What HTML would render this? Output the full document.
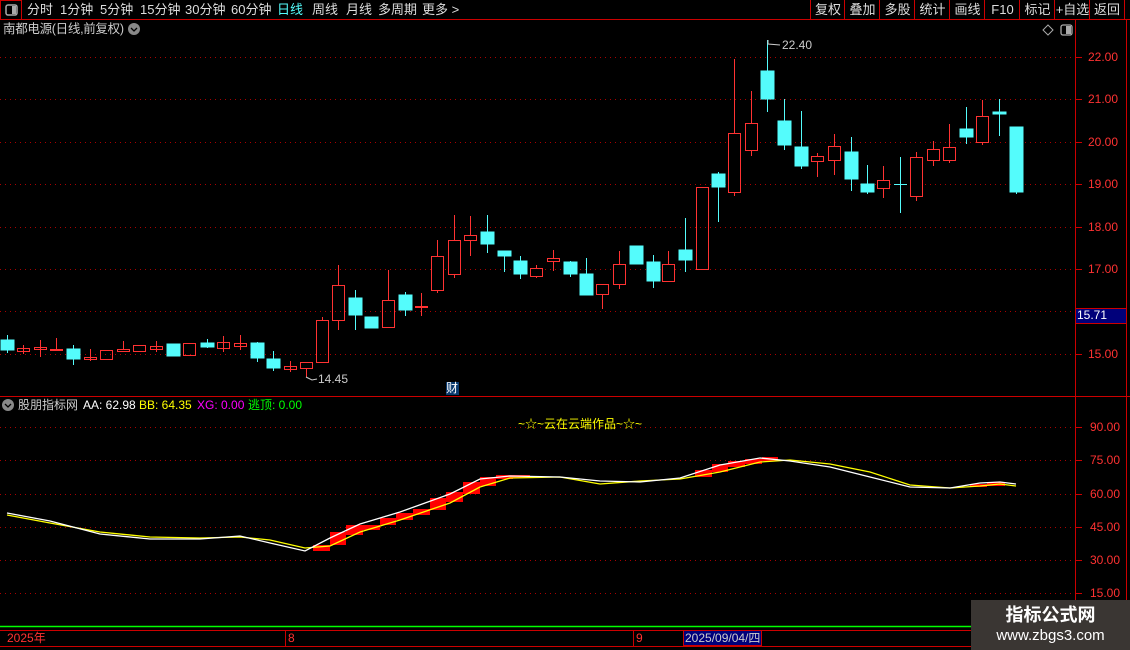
<!DOCTYPE html>
<html><head><meta charset="utf-8"><style>
body{margin:0;width:1130px;height:650px;background:#000;overflow:hidden;position:relative;font-family:"Liberation Sans","Noto Sans CJK SC",sans-serif;}
.t{position:absolute;white-space:nowrap;font-size:13px;line-height:15px;}
.btn{position:absolute;top:0;height:19px;border-left:1px solid #c00;color:#ddd;font-size:13px;line-height:19px;text-align:center;}
svg{position:absolute;left:0;top:0;}
</style></head><body>
<svg width="1130" height="650">
<line x1="0" y1="19.5" x2="1130" y2="19.5" stroke="#c00"/>
<rect x="0.5" y="0.5" width="21" height="19" fill="none" stroke="#c00"/>
<rect x="6" y="5" width="11" height="10" rx="2" fill="none" stroke="#aaa" stroke-width="1.5"/><rect x="12" y="6" width="4" height="8" fill="#aaa"/>
<line x1="0" y1="396.5" x2="1130" y2="396.5" stroke="#c00"/>
<line x1="1075.5" y1="20" x2="1075.5" y2="630" stroke="#c00"/>
<line x1="1126.5" y1="20" x2="1126.5" y2="630" stroke="#c00"/>
<g stroke="#a00" stroke-dasharray="1,4">
<line x1="0" y1="57.5" x2="1075" y2="57.5"/><line x1="0" y1="99.5" x2="1075" y2="99.5"/><line x1="0" y1="142.5" x2="1075" y2="142.5"/><line x1="0" y1="184.5" x2="1075" y2="184.5"/><line x1="0" y1="227.5" x2="1075" y2="227.5"/><line x1="0" y1="269.5" x2="1075" y2="269.5"/><line x1="0" y1="311.5" x2="1075" y2="311.5"/><line x1="0" y1="354.5" x2="1075" y2="354.5"/>
<line x1="0" y1="427.5" x2="1075" y2="427.5"/><line x1="0" y1="460.5" x2="1075" y2="460.5"/><line x1="0" y1="494.5" x2="1075" y2="494.5"/><line x1="0" y1="527.5" x2="1075" y2="527.5"/><line x1="0" y1="560.5" x2="1075" y2="560.5"/><line x1="0" y1="593.5" x2="1075" y2="593.5"/>
</g>
<g stroke="#c00"><line x1="1076" y1="57.5" x2="1082" y2="57.5"/><line x1="1076" y1="99.5" x2="1082" y2="99.5"/><line x1="1076" y1="142.5" x2="1082" y2="142.5"/><line x1="1076" y1="184.5" x2="1082" y2="184.5"/><line x1="1076" y1="227.5" x2="1082" y2="227.5"/><line x1="1076" y1="269.5" x2="1082" y2="269.5"/><line x1="1076" y1="354.5" x2="1082" y2="354.5"/>
<line x1="1076" y1="427.5" x2="1082" y2="427.5"/><line x1="1076" y1="460.5" x2="1082" y2="460.5"/><line x1="1076" y1="494.5" x2="1082" y2="494.5"/><line x1="1076" y1="527.5" x2="1082" y2="527.5"/><line x1="1076" y1="560.5" x2="1082" y2="560.5"/><line x1="1076" y1="593.5" x2="1082" y2="593.5"/></g>
<rect x="1075.5" y="308.5" width="51" height="15" fill="#00007a" stroke="#c00"/>
<g stroke="#54FCFC" fill="#54FCFC">
<line x1="7.5" y1="335" x2="7.5" y2="353"/><rect x="1" y="340" width="13" height="10"/>
<line x1="73.5" y1="345" x2="73.5" y2="365"/><rect x="67" y="349" width="13" height="10"/>
<rect x="167" y="344" width="13" height="12"/>
<line x1="207.5" y1="339" x2="207.5" y2="348"/><rect x="201" y="343" width="13" height="4"/>
<line x1="257.5" y1="342" x2="257.5" y2="362"/><rect x="251" y="343" width="13" height="15"/>
<line x1="273.5" y1="351" x2="273.5" y2="371"/><rect x="267" y="359" width="13" height="9"/>
<line x1="355.5" y1="290" x2="355.5" y2="330"/><rect x="349" y="298" width="13" height="17"/>
<rect x="365" y="317" width="13" height="11"/>
<line x1="405.5" y1="292" x2="405.5" y2="316"/><rect x="399" y="295" width="13" height="15"/>
<line x1="487.5" y1="215" x2="487.5" y2="253"/><rect x="481" y="232" width="13" height="12"/>
<line x1="504.5" y1="251" x2="504.5" y2="272"/><rect x="498" y="251" width="13" height="5"/>
<line x1="520.5" y1="256" x2="520.5" y2="279"/><rect x="514" y="261" width="13" height="13"/>
<line x1="570.5" y1="261" x2="570.5" y2="277"/><rect x="564" y="262" width="13" height="12"/>
<line x1="586.5" y1="258" x2="586.5" y2="295"/><rect x="580" y="274" width="13" height="21"/>
<rect x="630" y="246" width="13" height="18"/>
<line x1="653.5" y1="255" x2="653.5" y2="288"/><rect x="647" y="262" width="13" height="19"/>
<line x1="685.5" y1="218" x2="685.5" y2="272"/><rect x="679" y="250" width="13" height="10"/>
<line x1="718.5" y1="172" x2="718.5" y2="222"/><rect x="712" y="174" width="13" height="13"/>
<line x1="767.5" y1="40" x2="767.5" y2="112"/><rect x="761" y="71" width="13" height="28"/>
<line x1="784.5" y1="99" x2="784.5" y2="150"/><rect x="778" y="121" width="13" height="24"/>
<line x1="801.5" y1="111" x2="801.5" y2="169"/><rect x="795" y="147" width="13" height="19"/>
<line x1="851.5" y1="137" x2="851.5" y2="191"/><rect x="845" y="152" width="13" height="27"/>
<line x1="867.5" y1="165" x2="867.5" y2="194"/><rect x="861" y="184" width="13" height="8"/>
<line x1="900.5" y1="157" x2="900.5" y2="213"/><line x1="894" y1="184.5" x2="907" y2="184.5"/>
<line x1="966.5" y1="107" x2="966.5" y2="144"/><rect x="960" y="129" width="13" height="8"/>
<line x1="999.5" y1="99" x2="999.5" y2="136"/><rect x="993" y="112" width="13" height="2"/>
<line x1="1016.5" y1="127" x2="1016.5" y2="194"/><rect x="1010" y="127" width="13" height="65"/>
</g>
<g stroke="#FF3232" fill="none">
<rect x="17.5" y="348.5" width="12" height="3"/><line x1="23.5" y1="345" x2="23.5" y2="354"/>
<line x1="40.5" y1="340" x2="40.5" y2="357"/><rect x="34.5" y="347.5" width="12" height="2"/>
<line x1="56.5" y1="338" x2="56.5" y2="349"/><rect x="50.5" y="349.5" width="12" height="1"/>
<line x1="90.5" y1="349" x2="90.5" y2="361"/><rect x="84.5" y="357.5" width="12" height="2"/>
<rect x="100.5" y="350.5" width="12" height="9"/>
<line x1="123.5" y1="341" x2="123.5" y2="350"/><rect x="117.5" y="349.5" width="12" height="2"/>
<rect x="133.5" y="345.5" width="12" height="6"/>
<line x1="156.5" y1="341" x2="156.5" y2="352"/><rect x="150.5" y="346.5" width="12" height="3"/>
<rect x="183.5" y="343.5" width="12" height="12"/>
<line x1="223.5" y1="336" x2="223.5" y2="352"/><rect x="217.5" y="342.5" width="12" height="6"/>
<line x1="240.5" y1="335" x2="240.5" y2="350"/><rect x="234.5" y="343.5" width="12" height="3"/>
<line x1="290.5" y1="361" x2="290.5" y2="372"/><rect x="284.5" y="366.5" width="12" height="3"/>
<line x1="306.5" y1="368" x2="306.5" y2="377"/><rect x="300.5" y="362.5" width="12" height="6"/>
<rect x="316.5" y="320.5" width="12" height="42"/><line x1="322.5" y1="317" x2="322.5" y2="320"/>
<line x1="338.5" y1="265" x2="338.5" y2="285"/><rect x="332.5" y="285.5" width="12" height="35"/><line x1="338.5" y1="321" x2="338.5" y2="330"/>
<line x1="388.5" y1="270" x2="388.5" y2="300"/><rect x="382.5" y="300.5" width="12" height="27"/>
<line x1="421.5" y1="293" x2="421.5" y2="316"/><line x1="415" y1="307" x2="428" y2="307" stroke-width="2"/>
<line x1="437.5" y1="240" x2="437.5" y2="293"/><rect x="431.5" y="256.5" width="12" height="34" fill="#000"/>
<line x1="454.5" y1="215" x2="454.5" y2="278"/><rect x="448.5" y="240.5" width="12" height="34" fill="#000"/>
<line x1="470.5" y1="216" x2="470.5" y2="256"/><rect x="464.5" y="235.5" width="12" height="5" fill="#000"/>
<line x1="536.5" y1="265" x2="536.5" y2="278"/><rect x="530.5" y="268.5" width="12" height="8" fill="#000"/>
<line x1="553.5" y1="250" x2="553.5" y2="271"/><rect x="547.5" y="258.5" width="12" height="3" fill="#000"/>
<line x1="602.5" y1="294" x2="602.5" y2="309"/><rect x="596.5" y="284.5" width="12" height="10" fill="#000"/>
<line x1="619.5" y1="251" x2="619.5" y2="289"/><rect x="613.5" y="264.5" width="12" height="20" fill="#000"/>
<line x1="668.5" y1="251" x2="668.5" y2="281"/><rect x="662.5" y="264.5" width="12" height="17" fill="#000"/>
<rect x="696.5" y="187.5" width="12" height="82"/>
<line x1="734.5" y1="59" x2="734.5" y2="196"/><rect x="728.5" y="133.5" width="12" height="59" fill="#000"/>
<line x1="751.5" y1="91" x2="751.5" y2="156"/><rect x="745.5" y="123.5" width="12" height="27" fill="#000"/>
<line x1="817.5" y1="153" x2="817.5" y2="177"/><rect x="811.5" y="156.5" width="12" height="5" fill="#000"/>
<line x1="834.5" y1="134" x2="834.5" y2="175"/><rect x="828.5" y="146.5" width="12" height="14" fill="#000"/>
<line x1="883.5" y1="166" x2="883.5" y2="198"/><rect x="877.5" y="180.5" width="12" height="8" fill="#000"/>
<line x1="916.5" y1="152" x2="916.5" y2="201"/><rect x="910.5" y="157.5" width="12" height="39" fill="#000"/>
<line x1="933.5" y1="141" x2="933.5" y2="166"/><rect x="927.5" y="149.5" width="12" height="11" fill="#000"/>
<line x1="949.5" y1="124" x2="949.5" y2="163"/><rect x="943.5" y="147.5" width="12" height="13" fill="#000"/>
<line x1="982.5" y1="100" x2="982.5" y2="145"/><rect x="976.5" y="116.5" width="12" height="26" fill="#000"/>
</g>
<polyline points="768,40 768,44 780,45" fill="none" stroke="#ccc"/>
<polyline points="306,377 312,380 317,379" fill="none" stroke="#ccc"/>
<rect x="446" y="382" width="13" height="13" fill="#0a3a6e"/>
<g fill="#f00">
<rect x="313" y="545" width="17" height="6"/><rect x="330" y="532" width="16" height="13"/><rect x="346" y="525" width="17" height="10"/><rect x="363" y="525" width="17" height="5"/><rect x="380" y="518" width="16" height="7"/><rect x="396" y="513" width="17" height="7"/><rect x="413" y="509" width="17" height="6"/><rect x="430" y="498" width="16" height="12"/><rect x="446" y="492" width="17" height="10"/><rect x="463" y="482" width="17" height="12"/><rect x="480" y="477" width="16" height="9"/><rect x="496" y="475" width="17" height="4"/><rect x="513" y="475" width="17" height="3"/>
<rect x="695" y="470" width="17" height="7"/><rect x="712" y="464" width="16" height="8"/><rect x="728" y="461" width="17" height="6"/><rect x="745" y="459" width="17" height="5"/><rect x="762" y="457" width="16" height="4"/>
<rect x="970" y="484" width="17" height="3"/><rect x="987" y="482" width="18" height="4"/>
</g>
<polyline fill="none" stroke="#ff0" stroke-width="1.3" points="7,515 50,523 100,532 150,537 200,538 240,537 270,540 305,548 330,546 360,532 400,520 450,503 480,487 510,478 560,477 600,484 640,481 680,479 720,472 760,462 790,460 830,464 870,472 910,485 950,488 980,486 1000,484 1016,486"/>
<polyline fill="none" stroke="#fff" stroke-width="1.3" points="7,513 50,521 100,534 150,539 200,539 240,536 270,543 305,551 330,538 360,524 400,512 450,494 480,479 510,476 560,477 600,481 640,482 680,478 720,465 760,458 790,461 830,467 870,477 910,487 950,488 980,483 1000,482 1016,484"/>
<line x1="0" y1="626.5" x2="1130" y2="626.5" stroke="#0f0" stroke-width="1.5"/>
<line x1="0" y1="630.5" x2="1130" y2="630.5" stroke="#c00"/>
<line x1="0" y1="646.5" x2="1130" y2="646.5" stroke="#c00"/>
<line x1="285.5" y1="630" x2="285.5" y2="646" stroke="#c00"/>
<line x1="633.5" y1="630" x2="633.5" y2="646" stroke="#c00"/>
<rect x="683.5" y="630.5" width="78" height="15" fill="#00007a" stroke="#c00"/>
<path d="M1048,25 L1053,30 L1048,35 L1043,30 Z" fill="none" stroke="#aaa"/>
<rect x="1061" y="25" width="11" height="10" rx="2" fill="none" stroke="#aaa" stroke-width="1.3"/><rect x="1066" y="26" width="5" height="8" fill="#aaa"/>
<circle cx="134" cy="29" r="6" fill="#888"/><path d="M131,28 L134,31 L137,28" fill="none" stroke="#000" stroke-width="1.3"/>
<circle cx="8" cy="405" r="6" fill="#888"/><path d="M5,404 L8,407 L11,404" fill="none" stroke="#000" stroke-width="1.3"/>
</svg>
<div class="t" style="left:27px;top:2px;color:#ddd">分时</div>
<div class="t" style="left:60px;top:2px;color:#ddd">1分钟</div>
<div class="t" style="left:100px;top:2px;color:#ddd">5分钟</div>
<div class="t" style="left:140px;top:2px;color:#ddd">15分钟</div>
<div class="t" style="left:185px;top:2px;color:#ddd">30分钟</div>
<div class="t" style="left:231px;top:2px;color:#ddd">60分钟</div>
<div class="t" style="left:277px;top:2px;color:#54fcfc">日线</div>
<div class="t" style="left:312px;top:2px;color:#ddd">周线</div>
<div class="t" style="left:346px;top:2px;color:#ddd">月线</div>
<div class="t" style="left:378px;top:2px;color:#ddd">多周期</div>
<div class="t" style="left:422px;top:2px;color:#ddd">更多 &gt;</div>
<div class="btn" style="left:810px;width:34px">复权</div>
<div class="btn" style="left:844px;width:35px">叠加</div>
<div class="btn" style="left:879px;width:35px">多股</div>
<div class="btn" style="left:914px;width:35px">统计</div>
<div class="btn" style="left:949px;width:35px">画线</div>
<div class="btn" style="left:984px;width:35px">F10</div>
<div class="btn" style="left:1019px;width:35px">标记</div>
<div class="btn" style="left:1054px;width:35px">+自选</div>
<div class="btn" style="left:1089px;width:34px;border-right:1px solid #c00">返回</div>
<div class="t" style="left:3px;top:22px;color:#ccc;font-size:12.5px;letter-spacing:-0.3px">南都电源(日线,前复权)</div>
<div class="t" style="left:782px;top:38px;color:#ccc;font-size:12px">22.40</div>
<div class="t" style="left:318px;top:372px;color:#ccc;font-size:12px">14.45</div>
<div class="t" style="left:446px;top:381px;color:#fff;font-size:12px">财</div>
<div class="t" style="left:1088px;top:50px;color:#ff3232;font-size:12px">22.00</div>
<div class="t" style="left:1088px;top:92px;color:#ff3232;font-size:12px">21.00</div>
<div class="t" style="left:1088px;top:135px;color:#ff3232;font-size:12px">20.00</div>
<div class="t" style="left:1088px;top:177px;color:#ff3232;font-size:12px">19.00</div>
<div class="t" style="left:1088px;top:220px;color:#ff3232;font-size:12px">18.00</div>
<div class="t" style="left:1088px;top:262px;color:#ff3232;font-size:12px">17.00</div>
<div class="t" style="left:1077px;top:308px;color:#fff;font-size:12px">15.71</div>
<div class="t" style="left:1088px;top:347px;color:#ff3232;font-size:12px">15.00</div>
<div class="t" style="left:1090px;top:420px;color:#ff3232;font-size:12px">90.00</div>
<div class="t" style="left:1090px;top:453px;color:#ff3232;font-size:12px">75.00</div>
<div class="t" style="left:1090px;top:487px;color:#ff3232;font-size:12px">60.00</div>
<div class="t" style="left:1090px;top:520px;color:#ff3232;font-size:12px">45.00</div>
<div class="t" style="left:1090px;top:553px;color:#ff3232;font-size:12px">30.00</div>
<div class="t" style="left:1090px;top:586px;color:#ff3232;font-size:12px">15.00</div>
<div class="t" style="left:18px;top:398px;color:#ccc;font-size:12px">股朋指标网</div>
<div class="t" style="left:83px;top:398px;color:#fff;font-size:12px">AA: 62.98</div>
<div class="t" style="left:139px;top:398px;color:#ff0;font-size:12px">BB: 64.35</div>
<div class="t" style="left:197px;top:398px;color:#f0f;font-size:12px">XG: 0.00</div>
<div class="t" style="left:248px;top:398px;color:#0f0;font-size:12px">逃顶: 0.00</div>
<div class="t" style="left:518px;top:417px;color:#ff0;font-size:12px">~☆~云在云端作品~☆~</div>
<div class="t" style="left:7px;top:631px;color:#ff3232;font-size:12px">2025年</div>
<div class="t" style="left:288px;top:631px;color:#ff3232;font-size:12px">8</div>
<div class="t" style="left:636px;top:631px;color:#ff3232;font-size:12px">9</div>
<div class="t" style="left:685px;top:631px;color:#ccc;font-size:12px">2025/09/04/四</div>
<div style="position:absolute;left:971px;top:600px;width:159px;height:50px;background:#3a3633;"></div>
<div class="t" style="left:971px;top:604px;width:159px;text-align:center;color:#fff;font-size:18px;line-height:22px;font-weight:bold">指标公式网</div>
<div class="t" style="left:971px;top:627px;width:159px;text-align:center;color:#fff;font-size:15px;line-height:18px">www.zbgs3.com</div>
</body></html>
